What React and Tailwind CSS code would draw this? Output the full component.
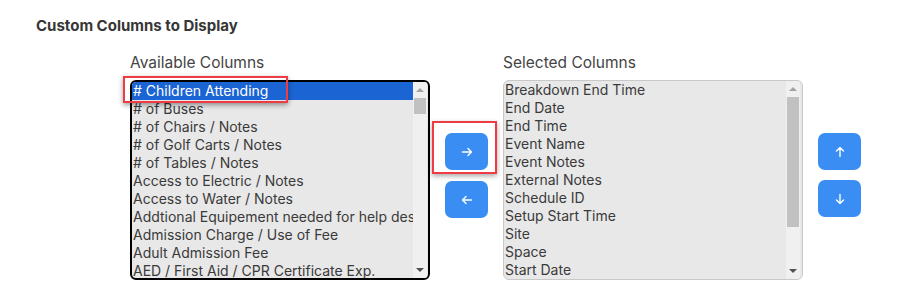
import React from 'react';

const available = [
  '# Children Attending',
  '# of Buses',
  '# of Chairs / Notes',
  '# of Golf Carts / Notes',
  '# of Tables / Notes',
  'Access to Electric / Notes',
  'Access to Water / Notes',
  'Addtional Equipement needed for help desk',
  'Admission Charge / Use of Fee',
  'Adult Admission Fee',
  'AED / First Aid / CPR Certificate Exp.',
];

const selected = [
  'Breakdown End Time',
  'End Date',
  'End Time',
  'Event Name',
  'Event Notes',
  'External Notes',
  'Schedule ID',
  'Setup Start Time',
  'Site',
  'Space',
  'Start Date',
];

const Arrow = ({ dir }) => {
  const rot = { right: 0, left: 180, up: -90, down: 90 }[dir];
  return (
    <svg width="12" height="12" viewBox="0 0 12 12" style={{ transform: `rotate(${rot}deg)` }}>
      <path d="M1.5 6h9M7 2.5 10.5 6 7 9.5" fill="none" stroke="white" strokeWidth="1.4" strokeLinecap="round" strokeLinejoin="round" />
    </svg>
  );
};

const Btn = ({ dir }) => (
  <button className="w-[43px] h-[37px] rounded-[7px] bg-[#3a8ef3] flex items-center justify-center">
    <Arrow dir={dir} />
  </button>
);

const Scrollbar = ({ thumbTop, thumbHeight }) => (
  <div className="w-[14px] h-full bg-[#f0f0f0] relative flex-none">
    <div className="absolute top-[6px] left-[3px] w-0 h-0 border-l-[4px] border-r-[4px] border-b-[4px] border-l-transparent border-r-transparent border-b-[#a3a3a3]" />
    <div className="absolute left-[1px] w-[12px] bg-[#c1c1c1]" style={{ top: thumbTop, height: thumbHeight }} />
    <div className="absolute bottom-[6px] left-[3px] w-0 h-0 border-l-[4px] border-r-[4px] border-t-[4px] border-l-transparent border-r-transparent border-t-[#505050]" />
  </div>
);

const ListBox = ({ items, active, thumbTop, thumbHeight, dark }) => (
  <div
    className={
      'w-[300px] h-[200px] rounded-[6px] bg-[#e8e8e8] flex overflow-hidden ' +
      (dark ? 'border-2 border-black' : 'border border-[#c8c8c8]')
    }
  >
    <div className="flex-1 min-w-0">
      {items.map((it, i) => (
        <div
          key={it}
          className={
            'h-[18px] leading-[18px] pl-[1px] text-[14px] whitespace-nowrap overflow-hidden ' +
            (i === active ? 'bg-[#1a64d4] text-white' : 'text-[#3a3a3a]')
          }
        >
          {it}
        </div>
      ))}
    </div>
    <div className={dark ? 'pr-[1px] h-full' : 'pr-[2px] h-full'}>
      <Scrollbar thumbTop={thumbTop} thumbHeight={thumbHeight} />
    </div>
  </div>
);

export default function App() {
  return (
    <div className="w-[903px] h-[296px] bg-white pl-[36px] pt-[16px]" style={{ fontFamily: 'Inter, "Liberation Sans", sans-serif' }}>
      <h2 className="text-[15px] leading-[20px] font-bold text-[#363636]">Custom Columns to Display</h2>
      <div className="flex mt-[17px] ml-[94px]">
        <div className="flex flex-col">
          <div className="text-[15.5px] leading-[20px] text-[#444] pb-[7px]">Available Columns</div>
          <div className="relative">
            <ListBox items={available} active={0} thumbTop={16} thumbHeight={16} dark />
            <div className="absolute left-[-7px] top-[-4px] w-[165px] h-[27px] border-[2.5px] border-[#ee3b44] shadow-[0_2px_5px_rgba(0,0,0,0.4)]" />
          </div>
        </div>
        <div className="flex flex-col gap-[11px] pt-[80px] mx-[15px]">
          <div className="relative">
            <Btn dir="right" />
            <div className="absolute left-[-13px] top-[-12px] w-[65px] h-[53px] border-[2.5px] border-[#ee3b44] shadow-[0_2px_5px_rgba(0,0,0,0.35)]" />
          </div>
          <Btn dir="left" />
        </div>
        <div className="flex flex-col">
          <div className="text-[15.5px] leading-[20px] text-[#444] pb-[7px]">Selected Columns</div>
          <ListBox items={selected} active={-1} thumbTop={16} thumbHeight={130} />
        </div>
        <div className="flex flex-col gap-[10px] pt-[80px] ml-[15px]">
          <Btn dir="up" />
          <Btn dir="down" />
        </div>
      </div>
    </div>
  );
}
